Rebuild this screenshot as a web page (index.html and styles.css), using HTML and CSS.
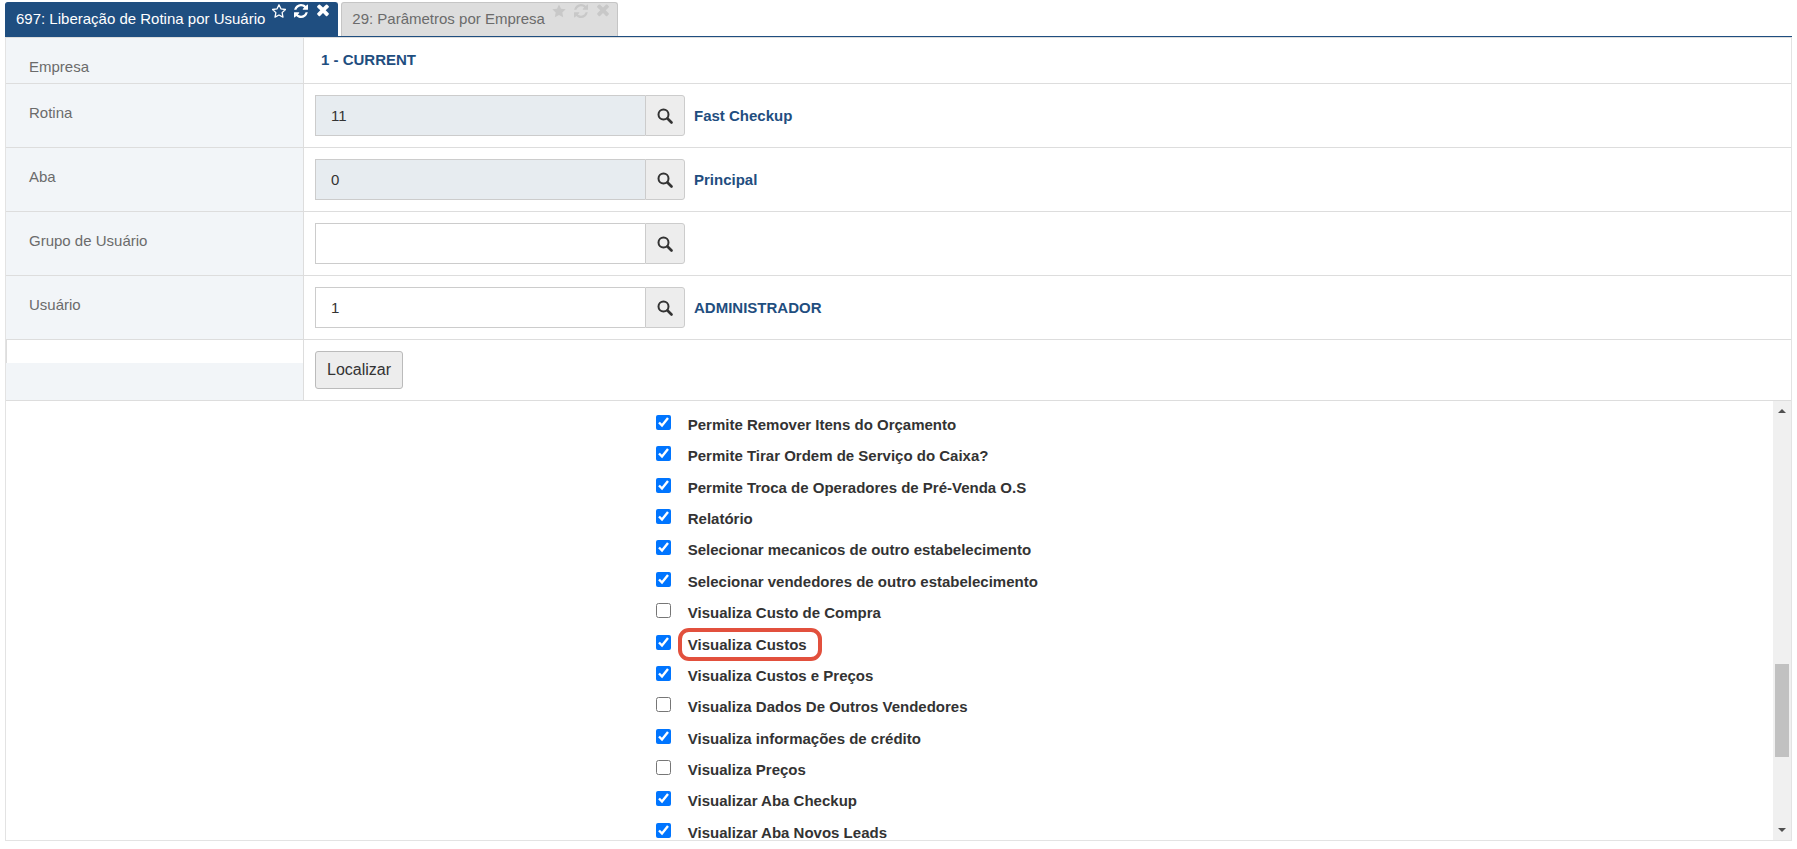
FILE: index.html
```html
<!DOCTYPE html>
<html lang="pt-BR">
<head>
    <meta charset="UTF-8">
    <meta name="viewport" content="width=device-width, initial-scale=1.0">
    <title>697: Liberação de Rotina por Usuário</title>
    <link rel="stylesheet" href="styles.css">
</head>
<body>
    <svg class="sprite" aria-hidden="true">
        <symbol id="icon-star-o" viewBox="0.5 0.5 13 13">
            <path d="M7 1.200l1.800 3.800 4.200.6-3.100 2.900.8 4.200L7 10.700l-3.700 2 .8-4.200L1 5.600l4.200-.6z" fill="none" stroke="currentColor" stroke-width="1.200" stroke-linejoin="round"/>
        </symbol>
        <symbol id="icon-star" viewBox="0 0 14 14">
            <path d="M7 .5l2 4.200 4.700.6-3.400 3.200.9 4.700L7 10.900l-4.200 2.300.9-4.700L.3 5.300 5 4.700z" fill="currentColor"/>
        </symbol>
        <symbol id="icon-refresh" viewBox="0 128 1536 1536">
            <path fill="currentColor" d="M1511 1056q0 5-1 7-64 268-268 434.500t-478 166.500q-146 0-282.500-55t-243.500-157l-129 129q-19 19-45 19t-45-19-19-45v-448q0-26 19-45t45-19h448q26 0 45 19t19 45-19 45l-137 137q71 66 161 102t187 36q134 0 250-65t186-179q11-17 53-117 8-23 30-23h192q13 0 22.500 9.500t9.500 22.500zm25-800v448q0 26-19 45t-45 19h-448q-26 0-45-19t-19-45 19-45l138-138q-148-137-349-137-134 0-250 65t-186 179q-11 17-53 117-8 23-30 23h-199q-13 0-22.500-9.500t-9.500-22.500v-7q65-268 270-434.500t480-166.500q146 0 284 55.500t245 156.500l130-129q19-19 45-19t45 19 19 45z"/>
        </symbol>
        <symbol id="icon-times" viewBox="0 325 1408 1408">
            <path fill="currentColor" d="M1298 1322q0 40-28 68l-136 136q-28 28-68 28t-68-28l-294-294-294 294q-28 28-68 28t-68-28l-136-136q-28-28-28-68t28-68l294-294-294-294q-28-28-28-68t28-68l136-136q28-28 68-28t68 28l294 294 294-294q28-28 68-28t68 28l136 136q28 28 28 68t-28 68l-294 294 294 294q28 28 28 68z"/>
        </symbol>
        <symbol id="icon-search" viewBox="0 0 16 16">
            <circle cx="6.500" cy="6.500" r="5" fill="none" stroke="currentColor" stroke-width="2"/>
            <path d="M10.500 10.500l4 4" stroke="currentColor" stroke-width="2.600" stroke-linecap="round"/>
        </symbol>
    </svg>

    <nav class="tabs">
        <div class="tab active">
            <a href="#rotina">697: Liberação de Rotina por Usuário</a>
            <button type="button" aria-label="Favoritar"><svg><use href="#icon-star-o"/></svg></button>
            <button type="button" aria-label="Atualizar"><svg><use href="#icon-refresh"/></svg></button>
            <button type="button" aria-label="Fechar"><svg><use href="#icon-times"/></svg></button>
        </div>
        <div class="tab">
            <a href="#parametros">29: Parâmetros por Empresa</a>
            <button type="button" aria-label="Favoritar"><svg><use href="#icon-star"/></svg></button>
            <button type="button" aria-label="Atualizar"><svg><use href="#icon-refresh"/></svg></button>
            <button type="button" aria-label="Fechar"><svg><use href="#icon-times"/></svg></button>
        </div>
    </nav>

    <form class="panel" id="rotina">
        <div class="row">
            <div class="row-label">Empresa</div>
            <div class="row-field row-text"><strong>1 - CURRENT</strong></div>
        </div>
        <div class="row">
            <label class="row-label" for="codRotina">Rotina</label>
            <div class="row-field">
                <div class="input-group">
                    <input type="text" id="codRotina" value="11" readonly>
                    <button type="button" aria-label="Pesquisar rotina"><svg><use href="#icon-search"/></svg></button>
                </div>
                <strong>Fast Checkup</strong>
            </div>
        </div>
        <div class="row">
            <label class="row-label" for="codAba">Aba</label>
            <div class="row-field">
                <div class="input-group">
                    <input type="text" id="codAba" value="0" readonly>
                    <button type="button" aria-label="Pesquisar aba"><svg><use href="#icon-search"/></svg></button>
                </div>
                <strong>Principal</strong>
            </div>
        </div>
        <div class="row">
            <label class="row-label" for="codGrupo">Grupo de Usuário</label>
            <div class="row-field">
                <div class="input-group">
                    <input type="text" id="codGrupo">
                    <button type="button" aria-label="Pesquisar grupo"><svg><use href="#icon-search"/></svg></button>
                </div>
            </div>
        </div>
        <div class="row">
            <label class="row-label" for="codUsuario">Usuário</label>
            <div class="row-field">
                <div class="input-group">
                    <input type="text" id="codUsuario" value="1">
                    <button type="button" aria-label="Pesquisar usuário"><svg><use href="#icon-search"/></svg></button>
                </div>
                <strong>ADMINISTRADOR</strong>
            </div>
        </div>
        <div class="row">
            <div class="row-label row-label-empty"></div>
            <div class="row-field"><button type="button" class="btn">Localizar</button></div>
        </div>

        <div class="permissions">
            <div class="permissions-list">
                <label><input type="checkbox" checked><span>Permite Remover Itens do Orçamento</span></label>
                <label><input type="checkbox" checked><span>Permite Tirar Ordem de Serviço do Caixa?</span></label>
                <label><input type="checkbox" checked><span>Permite Troca de Operadores de Pré-Venda O.S</span></label>
                <label><input type="checkbox" checked><span>Relatório</span></label>
                <label><input type="checkbox" checked><span>Selecionar mecanicos de outro estabelecimento</span></label>
                <label><input type="checkbox" checked><span>Selecionar vendedores de outro estabelecimento</span></label>
                <label><input type="checkbox"><span>Visualiza Custo de Compra</span></label>
                <label><input type="checkbox" checked><span class="highlight">Visualiza Custos</span></label>
                <label><input type="checkbox" checked><span>Visualiza Custos e Preços</span></label>
                <label><input type="checkbox"><span>Visualiza Dados De Outros Vendedores</span></label>
                <label><input type="checkbox" checked><span>Visualiza informações de crédito</span></label>
                <label><input type="checkbox"><span>Visualiza Preços</span></label>
                <label><input type="checkbox" checked><span>Visualizar Aba Checkup</span></label>
                <label><input type="checkbox" checked><span>Visualizar Aba Novos Leads</span></label>
            </div>
            <div class="scrollbar" aria-hidden="true">
                <svg viewBox="0 0 8 4"><path d="M0 4l4-4 4 4z"/></svg>
                <div class="scrollbar-track"><div class="scrollbar-thumb"></div></div>
                <svg viewBox="0 0 8 4"><path d="M0 0l4 4 4-4z"/></svg>
            </div>
        </div>
    </form>
</body>
</html>
```

FILE: styles.css
```css
* {
    box-sizing: border-box;
}
body {
    display: flex;
    flex-direction: column;
    height: 100vh;
    margin: 0;
    padding: 2px 5px 8px;
    background-color: #fff;
    color: #333;
    font-family: "Liberation Sans", Arial, sans-serif;
    font-size: 15px;
    line-height: 20px;
}
button, input {
    margin: 0;
    font-family: inherit;
    color: inherit;
}
.sprite {
    display: none;
}

/* Abas */
.tabs {
    display: flex;
    gap: 3px;
    border-bottom: 1px solid #1f4e80;
}
.tab {
    display: flex;
    align-items: flex-start;
    gap: 8px;
    height: 34px;
    padding: 0 7px 0 10px;
    background-color: #ddd;
    border: 1px solid #c5c5c5;
    border-bottom: 0;
    border-radius: 3px 3px 0 0;
    color: #c8c8c8;
}
.tab a {
    padding-top: 6px;
    margin-right: -1px;
    color: #6b6b6b;
    text-decoration: none;
    white-space: nowrap;
}
.tab button {
    padding: 1px 0 0;
    background: none;
    border: 0;
    line-height: 0;
    cursor: pointer;
}
.tab svg {
    width: 14px;
    height: 14px;
}
.tab.active {
    background-color: #1f4e80;
    border-color: #1f4e80;
    color: #fff;
}
.tab.active a {
    color: #fff;
}

/* Formulário */
.panel {
    display: flex;
    flex: 1;
    flex-direction: column;
    min-height: 0;
    border: 1px solid #e3e3e3;
    border-top-color: #ddd;
}
.row {
    display: flex;
    border-bottom: 1px solid #ddd;
}
.row-label {
    flex: 0 0 298px;
    padding: 19px 23px 6px;
    background-color: #f2f5f8;
    border-right: 1px solid #ddd;
    color: #6b6b6b;
}
.row-label-empty {
    padding: 0;
}
.row-label-empty::before {
    content: "";
    display: block;
    height: 23px;
    background-color: #fff;
    border-left: 1px solid #ddd;
}
.row-field {
    display: flex;
    align-items: center;
    gap: 9px;
    padding: 11px;
}
.row-text {
    align-items: flex-start;
    padding: 12px 17px;
}
.row-field strong {
    color: #1f4e80;
}
.input-group {
    display: flex;
    height: 41px;
}
.input-group input {
    width: 330px;
    padding: 0 15px;
    background-color: #fff;
    border: 1px solid #ccc;
    border-right: 0;
    border-radius: 0;
    font-size: 15px;
}
.input-group input[readonly] {
    background-color: #e7ecf0;
}
.input-group button {
    display: flex;
    align-items: center;
    justify-content: center;
    width: 40px;
    padding: 0;
    background-color: #ededed;
    border: 1px solid #ccc;
    border-radius: 0 3px 3px 0;
    cursor: pointer;
}
.input-group svg {
    width: 16px;
    height: 16px;
}
.btn {
    height: 38px;
    padding: 0 11px;
    background-color: #ededed;
    border: 1px solid #bbb;
    border-radius: 3px;
    font-size: 16px;
    cursor: pointer;
}

/* Lista de permissões */
.permissions {
    display: flex;
    flex: 1;
    min-height: 0;
}
.permissions-list {
    display: grid;
    flex: 1;
    grid-auto-rows: 1fr;
    padding-left: 36.4%;
}
.permissions-list label {
    display: flex;
    align-items: flex-start;
    gap: 17px;
    height: 20px;
    padding-top: 14px;
    font-weight: bold;
}
.permissions-list input {
    flex: none;
    width: 15px;
    height: 15px;
}
.highlight {
    position: relative;
}
.highlight::after {
    content: "";
    position: absolute;
    inset: -7px -15px -6px -10px;
    border: 4px solid #e2503d;
    border-radius: 11px;
}

/* Barra de rolagem */
.scrollbar {
    display: flex;
    flex-direction: column;
    align-items: center;
    width: 18px;
    padding: 8px 0;
    background-color: #f0f0f0;
}
.scrollbar svg {
    flex: none;
    width: 8px;
    height: 4px;
    fill: #505050;
}
.scrollbar-track {
    flex: 1;
    width: 14px;
    padding-top: 251px;
}
.scrollbar-thumb {
    height: 93px;
    background-color: #c1c1c1;
}
```
